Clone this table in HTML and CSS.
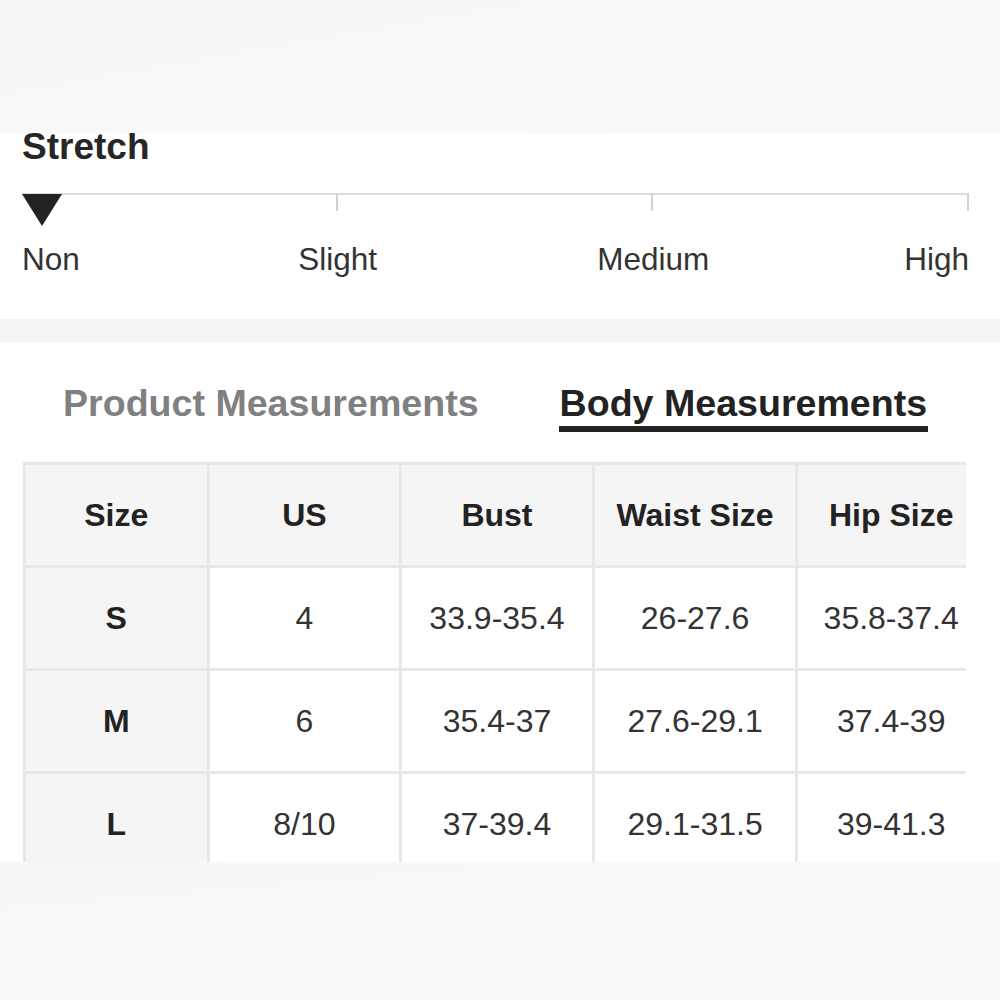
FILE: index.html
```html
<!DOCTYPE html>
<html lang="en">
<head>
<meta charset="utf-8">
<title>Size Guide</title>
<link rel="stylesheet" href="styles.css">
</head>
<body>
<div class="band band-top"></div>
<section class="stretch">
  <h2 class="stretch-title">Stretch</h2>
  <div class="scale">
    <div class="scale-track">
      <span class="seg"></span><span class="seg"></span><span class="seg"></span>
    </div>
    <span class="marker"></span>
  </div>
  <div class="scale-labels">
    <span class="lbl lbl-non">Non</span>
    <span class="lbl lbl-slight">Slight</span>
    <span class="lbl lbl-medium">Medium</span>
    <span class="lbl lbl-high">High</span>
  </div>
</section>
<div class="band band-mid"></div>
<section class="measure">
  <div class="tabs">
    <span class="tab">Product Measurements</span>
    <span class="tab tab-active">Body Measurements</span>
  </div>
  <div class="table-wrap">
    <table class="size-table">
      <thead>
        <tr>
          <th class="c1">Size</th>
          <th class="c2">US</th>
          <th class="c3">Bust</th>
          <th class="c4">Waist Size</th>
          <th class="c5">Hip Size</th>
        </tr>
      </thead>
      <tbody>
        <tr><th>S</th><td>4</td><td>33.9-35.4</td><td>26-27.6</td><td>35.8-37.4</td></tr>
        <tr><th>M</th><td>6</td><td>35.4-37</td><td>27.6-29.1</td><td>37.4-39</td></tr>
        <tr><th>L</th><td>8/10</td><td>37-39.4</td><td>29.1-31.5</td><td>39-41.3</td></tr>
      </tbody>
    </table>
  </div>
</section>
<div class="band band-bottom"></div>
</body>
</html>
```

FILE: styles.css
```css
* { box-sizing: border-box; }
html, body { margin: 0; padding: 0; background: #fff; }
body {
  font-family: "Liberation Sans", Arial, Helvetica, sans-serif;
  color: #333;
  width: 1000px;
  height: 1000px;
  overflow: hidden;
}

.band { background: #f8f8f8; }
.band-top { height: 133px; background: linear-gradient(170deg, #f6f6f6 0%, #fafafa 60%, #f8f8f8 100%); }
.band-mid { height: 23px; background: #f4f4f4; }
.band-bottom { height: 138px; background: linear-gradient(175deg, #f7f7f7 0%, #fafafa 60%, #f8f8f8 100%); }

/* Stretch */
.stretch {
  height: 186px;
  overflow: hidden;
  padding: 0 31px 0 22px;
}
.stretch-title {
  margin: -5px 0 0;
  font-size: 37px;
  line-height: 37px;
  font-weight: 700;
  color: #262626;
}
.scale {
  position: relative;
  margin-top: 28px;
}
.scale-track { display: flex; }
.seg {
  flex: 1;
  height: 18px;
  border-top: 2px solid #dcdcdc;
  border-right: 2px solid #d2d2d2;
}
.marker {
  position: absolute;
  left: 0;
  top: 1px;
  width: 0;
  height: 0;
  border-left: 20px solid transparent;
  border-right: 20px solid transparent;
  border-top: 32px solid #222;
}
.scale-labels {
  display: grid;
  grid-template-columns: repeat(6, 1fr);
  margin-top: 30px;
  font-size: 31.5px;
  line-height: 36px;
  color: #333;
}
.lbl-non { grid-column: 1; text-align: left; }
.lbl-slight { grid-column: 2 / 4; text-align: center; }
.lbl-medium { grid-column: 4 / 6; text-align: center; }
.lbl-high { grid-column: 6; text-align: right; }

/* Measurements */
.measure {
  height: 520px;
  overflow: hidden;
}
.tabs {
  display: flex;
  padding: 43px 0 0 63px;
  gap: 80px;
}
.tab {
  font-size: 37.6px;
  line-height: 37px;
  font-weight: 700;
  color: #808080;
  padding: 0 0 4px;
  border-bottom: 6px solid transparent;
}
.tab-active {
  color: #222;
  padding: 0 1px 4px;
  border-bottom-color: #222;
}

.table-wrap {
  margin: 30px 0 0 23px;
  width: 943px;
  overflow: hidden;
}
.size-table {
  border-collapse: separate;
  border-spacing: 0;
  table-layout: fixed;
  width: 964px;
  border-top: 3px solid #e8e8e8;
  border-left: 3px solid #e8e8e8;
}
.size-table th,
.size-table td {
  height: 103px;
  padding: 0;
  text-align: center;
  vertical-align: middle;
  border-right: 3px solid #e8e8e8;
  border-bottom: 3px solid #e8e8e8;
  font-size: 32px;
  line-height: 36px;
}
.size-table th {
  font-weight: 700;
  color: #222;
  background: #f5f5f5;
}
.size-table td {
  color: #333;
  background: #fff;
}
.c1 { width: 183px; }
.c2 { width: 192px; }
.c3 { width: 192px; }
.c4 { width: 203px; }
.c5 { width: 188px; }
```
